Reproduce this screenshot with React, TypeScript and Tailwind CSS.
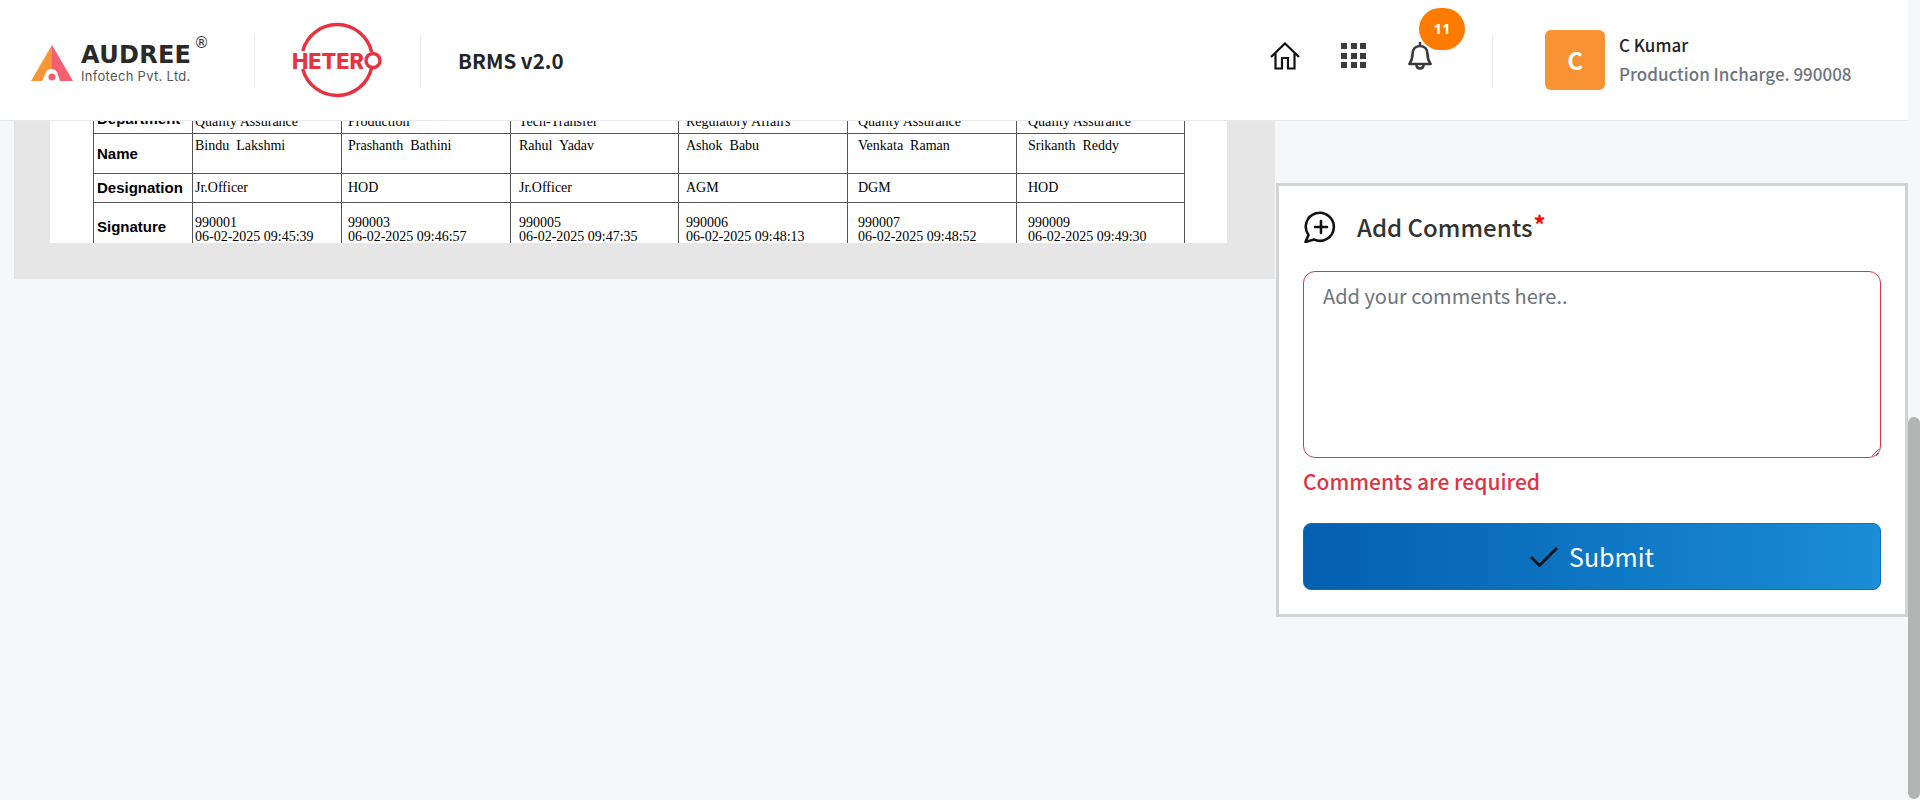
const sans = "font-['Noto_Sans_CJK_KR','Noto_Sans',sans-serif]";

const columns = [99, 149, 169, 168, 169, 169, 168];
const paddings = ["pl-[2px]", "pl-[6px]", "pl-[8px]", "pl-[7px]", "pl-[10px]", "pl-[11px]"];

const people = [
  { dept: "Quality Assurance", name: "Bindu  Lakshmi", role: "Jr.Officer", id: "990001", at: "06-02-2025 09:45:39" },
  { dept: "Production", name: "Prashanth  Bathini", role: "HOD", id: "990003", at: "06-02-2025 09:46:57" },
  { dept: "Tech-Transfer", name: "Rahul  Yadav", role: "Jr.Officer", id: "990005", at: "06-02-2025 09:47:35" },
  { dept: "Regulatory Affairs", name: "Ashok  Babu", role: "AGM", id: "990006", at: "06-02-2025 09:48:13" },
  { dept: "Quality Assurance", name: "Venkata  Raman", role: "DGM", id: "990007", at: "06-02-2025 09:48:52" },
  { dept: "Quality Assurance", name: "Srikanth  Reddy", role: "HOD", id: "990009", at: "06-02-2025 09:49:30" },
];

function AudreeLogo() {
  return (
    <div className="flex items-start">
      <svg width="42" height="36" viewBox="0 0 42 36" className="mt-[7px]">
        <path d="M21 0 L21 24 A6 6 0 0 0 15 27 L11 36 L0 36 Z" fill="#fa9536" />
        <path d="M21 0 L42 36 L29 36 L26 27 A6 6 0 0 0 21 24 Z" fill="#f65e72" />
        <circle cx="21" cy="32" r="3.6" fill="#f65e72" />
      </svg>
      <div className="ml-[8px] flex w-[113px] flex-col">
        <span className="mt-[4px] font-['DejaVu_Sans',sans-serif] text-[24px] leading-[26px] font-bold tracking-[0.3px] text-[#2a2a2a]">AUDREE</span>
        <span className="mt-[1px] font-['Inter',sans-serif] text-[13px] leading-[14px] tracking-[0.3px] whitespace-nowrap text-[#555]">Infotech Pvt. Ltd.</span>
      </div>
      <span className="mt-[-4px] font-['DejaVu_Sans',sans-serif] text-[15px] leading-[18px] text-[#333]">®</span>
    </div>
  );
}

function HeteroLogo() {
  return (
    <svg width="92" height="76" viewBox="0 0 92 76">
      <path d="M10.7 29 A35.5 35.5 0 0 1 79.6 30" fill="none" stroke="#e9323f" strokeWidth="3.4" />
      <path d="M10.7 47 A35.5 35.5 0 0 0 79.6 46" fill="none" stroke="#e9323f" strokeWidth="3.4" />
      <text x="0" y="47" textLength="72" lengthAdjust="spacingAndGlyphs" fill="#e9323f" fontFamily="Inter, sans-serif" fontWeight="800" fontSize="22">
        HETER
      </text>
      <circle cx="81" cy="38.5" r="7" fill="none" stroke="#e9323f" strokeWidth="3.4" />
    </svg>
  );
}

function HomeIcon() {
  return (
    <svg width="30" height="28" viewBox="0 0 30 28" fill="none" stroke="#111" strokeWidth="2.2" strokeLinejoin="miter">
      <path d="M1 15 L15 1.5 L29 15 M5.5 11.5 V26.5 H12 V16 H18 V26.5 H24.5 V11.5" />
    </svg>
  );
}

function GridIcon() {
  return (
    <div className="grid w-[25px] grid-cols-3 gap-[3.5px]">
      {Array.from({ length: 9 }).map((_, i) => (
        <span key={i} className="h-[6px] w-[6px] bg-[#3c3c3c]" />
      ))}
    </div>
  );
}

function BellIcon() {
  return (
    <svg width="24" height="28" viewBox="0 0 24 28" fill="none" stroke="#3a3a3a" strokeWidth="2.6" strokeLinecap="round" strokeLinejoin="round">
      <path d="M12 1 V4 M12 4 C7 4 4.5 7.5 4.5 12 C4.5 17 3.5 19 1.4 22 H22.6 C20.5 19 19.5 17 19.5 12 C19.5 7.5 17 4 12 4 Z" />
      <path d="M8.5 23 C8.5 27.5 15.5 27.5 15.5 23" />
    </svg>
  );
}

function CommentPlusIcon() {
  return (
    <svg width="32" height="32" viewBox="0 0 32 32" fill="none" stroke="#111" strokeWidth="2.6" strokeLinecap="round" strokeLinejoin="round">
      <path d="M4.5 24 A14 14 0 1 1 10 28.5 L1.5 31 Z" />
      <path d="M17 10 V22 M11 16 H23" />
    </svg>
  );
}

function Header() {
  return (
    <header className={`flex h-[121px] items-center border-b border-[#e6e8eb] bg-white ${sans}`}>
      <div className="ml-[31px] w-[223px]"><AudreeLogo /></div>
      <div className="h-[53px] w-px bg-[#e8e9ea]" />
      <div className="ml-[37px] w-[128px]"><HeteroLogo /></div>
      <div className="h-[53px] w-px bg-[#e8e9ea]" />
      <div className="ml-[37px] w-[104px] text-[20.5px] leading-none font-semibold whitespace-nowrap text-[#212529]">BRMS v2.0</div>

      <div className="mb-[9px] ml-[708px] flex items-center">
        <HomeIcon />
        <div className="ml-[41px]"><GridIcon /></div>
        <div className="relative ml-[42px]">
          <BellIcon />
          <span className="absolute top-[-34px] left-[11px] flex h-[42px] w-[46px] items-center justify-center rounded-full bg-[#ff7b00] font-['Noto_Sans',sans-serif] text-[15px] font-bold text-white">
            11
          </span>
        </div>
      </div>
      <div className="ml-[60px] h-[53px] w-px bg-[#e8e9ea]" />
      <div className="ml-[52px] flex h-[60px] w-[60px] items-center justify-center rounded-[6px] bg-[#f79333] text-[24px] font-semibold text-white">
        C
      </div>
      <div className="ml-[14px] flex flex-col pb-[2px]">
        <span className="text-[17px] leading-[29px] font-medium text-[#212529]">C Kumar</span>
        <span className="text-[17px] leading-[29px] font-medium whitespace-nowrap text-[#6c757d]">Production Incharge. 990008</span>
      </div>
    </header>
  );
}

function SignOffTable() {
  const label = "border border-[#555] pl-[3px] align-middle font-['Liberation_Sans',sans-serif] text-[15px] leading-[18px] font-bold text-black";
  const cell = "border border-[#555] align-top font-['Liberation_Serif',serif] text-[14px] leading-[14px] whitespace-pre text-black";
  return (
    <table className="-mt-[18px] ml-[43px] w-[1092px] table-fixed border-collapse">
      <colgroup>
        {columns.map((w, i) => (
          <col key={i} style={{ width: w }} />
        ))}
      </colgroup>
      <tbody>
        <tr className="h-[30px]">
          <td className={label}>Department</td>
          {people.map((p, i) => (
            <td key={i} className={`${cell} pt-[11px] ${paddings[i]}`}>{p.dept}</td>
          ))}
        </tr>
        <tr className="h-[40px]">
          <td className={label}>Name</td>
          {people.map((p, i) => (
            <td key={i} className={`${cell} pt-[5px] ${paddings[i]}`}>{p.name}</td>
          ))}
        </tr>
        <tr className="h-[29px]">
          <td className={label}>Designation</td>
          {people.map((p, i) => (
            <td key={i} className={`${cell} pt-[7px] ${paddings[i]}`}>{p.role}</td>
          ))}
        </tr>
        <tr className="h-[60px]">
          <td className={`${label} pb-[12px]`}>Signature</td>
          {people.map((p, i) => (
            <td key={i} className={`${cell} pt-[13px] ${paddings[i]}`}>
              {p.id}
              {"\n"}
              {p.at}
            </td>
          ))}
        </tr>
      </tbody>
    </table>
  );
}

function CommentsCard() {
  return (
    <div className={`ml-[1px] h-[434px] border-[3px] border-[#d2d3d4] bg-white px-[24px] ${sans}`}>
      <div className="mt-[25px] flex h-[32px] items-center pl-[1px]">
        <CommentPlusIcon />
        <h2 className="ml-[21px] text-[24px] leading-none font-medium text-[#333]">
          Add Comments<span className="relative top-[-3px] ml-[1px] font-bold text-[#ff0000]">*</span>
        </h2>
      </div>
      <textarea
        placeholder="Add your comments here.."
        className="mt-[28px] block h-[187px] w-full rounded-[12px] border border-[#dc3545] bg-white px-[19px] py-[9px] text-[20px] leading-[30px] outline-none placeholder:text-[#6c757d]"
      />
      <p className="mt-[7px] text-[21px] leading-[32px] font-medium text-[#dc3545]">Comments are required</p>
      <button className="mt-[26px] flex h-[67px] w-full items-center justify-center rounded-[8px] border border-[#0a6fb8] bg-gradient-to-r from-[#045fb0] to-[#1a8dd6] text-[25px] leading-none text-white">
        <svg width="28" height="20" viewBox="0 0 28 20" fill="none" stroke="#111" strokeWidth="2.8">
          <path d="M1 10 L9.5 18.5 L27 1" />
        </svg>
        <span className="ml-[11px]">Submit</span>
      </button>
    </div>
  );
}

export default function App() {
  return (
    <div className="flex h-[800px] overflow-hidden bg-[#f6f7f9]">
      <div className="flex w-[1908px] flex-col">
        <Header />
        <div className="flex">
          <div className="w-[1275px] pl-[14px]">
            <div className="h-[158px] bg-[#e6e6e6] pl-[36px]">
              <div className="h-[122px] w-[1177px] overflow-hidden bg-white">
                <SignOffTable />
              </div>
            </div>
          </div>
          <div className="w-[633px] pt-[62px]">
            <CommentsCard />
          </div>
        </div>
      </div>
      <div className="flex w-[12px] flex-col pt-[417px] pb-[1px]">
        <div className="flex-1 rounded-full bg-[#b3b5b4]" />
      </div>
    </div>
  );
}
